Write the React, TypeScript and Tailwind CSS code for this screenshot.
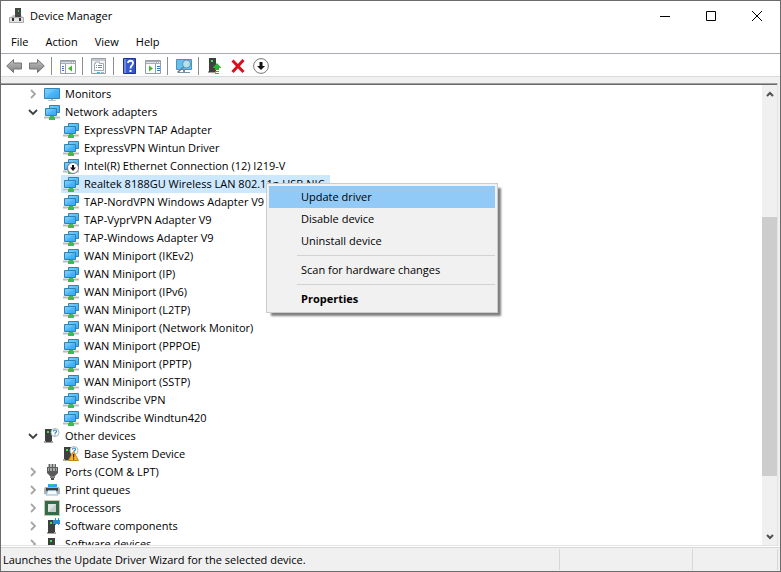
import React from 'react';
import clsx from 'clsx';

type IconProps = { className?: string };

const Svg = ({ className, children }: IconProps & { children: React.ReactNode }) => (
  <svg viewBox="0 0 16 16" fill="none" aria-hidden="true" className={clsx("h-4 w-4 shrink-0", className)}>
    {children}
  </svg>
);

const AppIcon = () => (
  <Svg>
    <path d="M6 0h6v9H6z" fill="#454745" />
    <path d="M9 2h1v2H9z" fill="#27e03c" />
    <path d="M2 9 4 7h2v2h6V7l2 2z" fill="#c6c6c6" />
    <path d="M.5 9.500h14v5H.5z" fill="#e2e3e4" stroke="#a9abac" />
    <path d="M3 10h2v3H3zM10 10h2v3h-2z" fill="#333" />
  </Svg>
);

const MonitorIcon = () => (
  <Svg>
    <path d="M.5 2.500h15v10H.5z" fill="url(#screen)" stroke="#3686b5" />
    <path d="M1 12 12 3h3v9z" fill="#2ba5fb" opacity=".35" />
    <path d="M7 13h2v1H7z" fill="#a7b4bc" />
    <path d="M4 14h8v1H4z" fill="#b8c8d1" />
  </Svg>
);

const NetworkIcon = ({ disabled }: { disabled?: boolean }) => (
  <Svg>
    <path d="M0 12h16v3H0z" fill="#dcdedf" />
    <path d="M0 13h16v1H0z" fill="#b9bcbd" />
    <path d="M5.500 1.500h10v7h-10z" fill="url(#screen)" stroke="#2f83b4" />
    <path d="M1.500 4.500h11v7h-11z" fill="url(#screen)" stroke="#2f83b4" />
    <path d="M2 11 11 5h1v6z" fill="#2ba5fb" opacity=".35" />
    <path d="M6 12h4v1h1v3H5v-3h1z" fill="#3fb950" />
    {disabled && (
      <>
        <circle cx="10" cy="10" r="5.500" fill="#fff" stroke="#777" />
        <path d="M9 7h2v2.500h2L10 13 7 9.500h2z" fill="#111" />
      </>
    )}
  </Svg>
);

const UnknownIcon = ({ warning }: { warning?: boolean }) => (
  <Svg>
    <path d="M1 1h7v12H1z" fill="#3e4040" />
    <path d="M0 13h9v2H0z" fill="#a4a6a6" />
    <path d="M2 13h5v1H2z" fill="#3e4040" />
    <path d="M3 3h2v2H3z" fill="#34e646" />
    <circle cx="11" cy="4.500" r="4" fill="#fff" stroke="#a9b6be" />
    <path d="M9.500 3.500c0-2 3-2 3 0 0 1-1.500 1-1.500 2.200M11 6.500v1" stroke="#2f87c4" strokeWidth="1.200" />
    {warning && (
      <>
        <path d="M10.500 5.500 15.500 14.500h-10z" fill="#fcb52b" stroke="#c98511" strokeLinejoin="round" />
        <path d="M10 8h1.200v3.500H10zM10 12.300h1.200v1.200H10z" fill="#222" />
      </>
    )}
  </Svg>
);

const PortIcon = () => (
  <Svg>
    <path d="M4 0h8v3H4z" fill="#b4b6b6" />
    <path d="M3 3h11v6l-3 3H6L3 9z" fill="#595b5b" />
    <path d="M4 4h9v3H4z" fill="#a4a6a6" />
    <path d="M5.500 0v7M8.500 0v7M11.500 0v7" stroke="#616363" />
    <path d="M6 12h5v2H6z" fill="#828484" />
    <path d="M7 14h3v2H7z" fill="#4b4d4d" />
  </Svg>
);

const PrinterIcon = () => (
  <Svg>
    <path d="M4 2h9v3H4z" fill="#2aa7f2" />
    <path d="M6 2h3v2H6z" fill="#46c84a" />
    <path d="M1 5h14l1 2v5H0V7z" fill="#aeb2b4" />
    <path d="M2 6h12v3H2z" fill="#3f4242" />
    <path d="M4 8.500h8l2 4.500H2z" fill="#f6f9fb" stroke="#8ab7d3" />
  </Svg>
);

const ProcessorIcon = () => (
  <Svg>
    <path d="M.5.500h15v15H.5z" stroke="#a28e4d" strokeDasharray="1 1" />
    <path d="M1 1h14v14H1z" fill="#326b50" />
    <path d="M4 4h8v8H4z" fill="#dfe4e1" />
    <path d="M4 12 12 4v8z" fill="#c4cdc8" />
  </Svg>
);

const SoftwareIcon = ({ component }: { component?: boolean }) => (
  <Svg>
    <path d="M4 2h7v12H4z" fill="#3e4040" />
    <path d="M3 14h9v2H3z" fill="#a4a6a6" />
    <path d="M4 14h6v1H4z" fill="#3e4040" />
    <path d="M6 4h2v2H6z" fill="#34e646" />
    {component && <path d="M9 2h2V0h1v2h2V0h1v2h1v4h-1v1h-1V6h-2v1h-1V6H9z" fill="#2d8bd0" />}
  </Svg>
);

const Arrow = ({ flip }: { flip?: boolean }) => (
  <Svg className={flip ? "-scale-x-100" : ""}>
    <path d="M.7 8 7.500 1.500V5h8v6h-8v3.500z" fill="url(#steel)" stroke="#757575" strokeLinejoin="round" />
  </Svg>
);

const PaneIcon = ({ flip }: { flip?: boolean }) => (
  <Svg>
    <path d="M.5 2.500h15v13H.5z" fill="#fbfbfb" stroke="#979da5" />
    <path d="M1 3h14v3H1z" fill="#a8aeb7" />
    <path d="M1 4h10v1H1z" fill="#dde1e6" />
    <path d="M12 4h1v1h-1zM14 4h1v1h-1z" fill="#fff" />
    {flip ? (
      <>
        <path d="M10.500 6v9" stroke="#979da5" />
        <path d="M12 8.500h3M12 10.500h3M12 12.500h3" stroke="#3e78b8" />
        <path d="M4 7.500v6l4-3z" fill="#43b62a" />
      </>
    ) : (
      <>
        <path d="M5.500 6v9" stroke="#979da5" />
        <path d="M2 8.500h2M2 10.500h2M2 12.500h2" stroke="#3e78b8" />
        <path d="M12 7.500v6l-4-3z" fill="#43b62a" />
      </>
    )}
  </Svg>
);

const PropertiesIcon = () => (
  <Svg>
    <path d="M.5.500h14v15H.5z" fill="#f3f4f5" stroke="#979da5" />
    <path d="M1 1h13v2H1z" fill="#c3c8ce" />
    <path d="M3.500 5.500h1V4h4v1.500h4v7h-9z" fill="#fff" stroke="#a2a8af" />
    <path d="M5 7.500h1M7 7.500h4M5 9.500h1M7 9.500h4" stroke="#7c8aa0" />
    <path d="M6 14h3v1H6z" fill="#20c3ef" />
    <path d="M10 14h3v1h-3z" fill="#b1b6bc" />
  </Svg>
);

const HelpIcon = () => (
  <Svg>
    <path d="M1.500.500h12v15h-12z" fill="#3559cf" stroke="#1c3392" />
    <path d="M2 1h2v14H2z" fill="#6e8ae6" />
    <path d="M6 5c0-3 5-3 5 0C11 7.500 8.500 7.500 8.500 10.500" stroke="#fff" strokeWidth="1.800" />
    <path d="M7.500 12h2v2h-2z" fill="#fff" />
  </Svg>
);

const ScanIcon = () => (
  <Svg>
    <path d="M.5 1.500h15v10H.5z" fill="#63c0f2" stroke="#4c93bb" />
    <path d="M2 14h12v1H2zM7 12h2v2H7z" fill="#7893a3" />
    <circle cx="10.500" cy="6" r="4" fill="#b8e2f8" fillOpacity=".9" stroke="#708c9e" />
    <path d="m7.500 9-6 5.500" stroke="#65818f" strokeWidth="1.600" />
  </Svg>
);

const UpdateIcon = () => (
  <Svg>
    <path d="M2 0h7v13H2z" fill="#3e4040" />
    <path d="M1 13h8v2H1z" fill="#a4a6a6" />
    <path d="M2 13h6v1H2z" fill="#3e4040" />
    <path d="M4 2h2v2H4z" fill="#34e646" />
    <path d="M10 5 14.500 10H12v2H8v-2H5.500z" fill="#22b634" />
    <path d="M8 13h4v1H8zM8 15h4v1H8z" fill="#22b634" />
  </Svg>
);

const UninstallIcon = () => (
  <Svg>
    <path d="M2.500 2.500 13.500 14M13.500 2 2.500 14" stroke="#d9101c" strokeWidth="3" />
  </Svg>
);

const DisableIcon = () => (
  <Svg>
    <circle cx="8" cy="8" r="7.400" fill="#fff" stroke="#777" />
    <path d="M6.500 4h3v4h2.500L8 12 4 8h2.500z" fill="#111" />
  </Svg>
);

const toolGroups = [
  [
    { label: "Back", icon: <Arrow /> },
    { label: "Forward", icon: <Arrow flip /> },
  ],
  [{ label: "Show/Hide Console Tree", icon: <PaneIcon /> }],
  [{ label: "Properties", icon: <PropertiesIcon /> }],
  [
    { label: "Help", icon: <HelpIcon /> },
    { label: "Show/Hide Action Pane", icon: <PaneIcon flip /> },
  ],
  [{ label: "Scan for hardware changes", icon: <ScanIcon /> }],
  [
    { label: "Update driver", icon: <UpdateIcon /> },
    { label: "Uninstall device", icon: <UninstallIcon /> },
    { label: "Disable device", icon: <DisableIcon /> },
  ],
];

const categories = [
  { name: "Monitors", icon: <MonitorIcon />, devices: [] },
  {
    name: "Network adapters",
    icon: <NetworkIcon />,
    devices: [
      "ExpressVPN TAP Adapter",
      "ExpressVPN Wintun Driver",
      "Intel(R) Ethernet Connection (12) I219-V",
      "Realtek 8188GU Wireless LAN 802.11n USB NIC",
      "TAP-NordVPN Windows Adapter V9",
      "TAP-VyprVPN Adapter V9",
      "TAP-Windows Adapter V9",
      "WAN Miniport (IKEv2)",
      "WAN Miniport (IP)",
      "WAN Miniport (IPv6)",
      "WAN Miniport (L2TP)",
      "WAN Miniport (Network Monitor)",
      "WAN Miniport (PPPOE)",
      "WAN Miniport (PPTP)",
      "WAN Miniport (SSTP)",
      "Windscribe VPN",
      "Windscribe Windtun420",
    ],
  },
  { name: "Other devices", icon: <UnknownIcon />, devices: ["Base System Device"] },
  { name: "Ports (COM & LPT)", icon: <PortIcon />, devices: [] },
  { name: "Print queues", icon: <PrinterIcon />, devices: [] },
  { name: "Processors", icon: <ProcessorIcon />, devices: [] },
  { name: "Software components", icon: <SoftwareIcon component />, devices: [] },
  { name: "Software devices", icon: <SoftwareIcon />, devices: [] },
];

const selected = "Realtek 8188GU Wireless LAN 802.11n USB NIC";

const deviceIcon = (name: string) => {
  if (name === "Base System Device") return <UnknownIcon warning />;
  return <NetworkIcon disabled={name.startsWith("Intel")} />;
};

const menuGroups = [
  ["Update driver", "Disable device", "Uninstall device"],
  ["Scan for hardware changes"],
  ["Properties"],
];

const ContextMenu = () => (
  <div
    role="menu"
    className="absolute left-[265px] top-[182px] w-[232px] border border-[#ccc] bg-[#f1f1f1] p-0.5 shadow-[4px_4px_2px_-1px_rgba(0,0,0,0.5)]"
  >
    {menuGroups.map((group, index) => (
      <div key={index}>
        {index > 0 && <div className="my-[3px] ml-7 h-px bg-[#d2d2d2]" />}
        {group.map((item) => (
          <button
            key={item}
            role="menuitem"
            className={clsx(
              "block h-[22px] w-full pl-8 text-left",
              item === "Update driver" && "bg-[#91c9f7]",
              item === "Properties" && "font-bold"
            )}
          >
            {item}
          </button>
        ))}
      </div>
    ))}
  </div>
);

const DeviceTree = () => (
  <ul role="tree" aria-label="Devices" className="min-w-0 flex-1 overflow-hidden pl-6">
    {categories.map(({ name, icon, devices }) => {
      const open = devices.length > 0;
      return (
        <li key={name} role="treeitem" aria-expanded={open}>
          <div className="flex h-[18px] items-center">
            <button aria-label={`Toggle ${name}`} className="mr-[3px] flex w-4 justify-center">
              <svg viewBox="0 0 10 10" className="h-2.5 w-2.5" fill="none" strokeWidth="1.800">
                {open ? <path d="M1 3 5 7 9 3" stroke="#404040" /> : <path d="M3 1 7 5 3 9" stroke="#a6a6a6" />}
              </svg>
            </button>
            {icon}
            <span className="ml-1 whitespace-nowrap px-px">{name}</span>
          </div>
          {open && (
            <ul role="group" className="pl-9">
              {devices.map((device) => (
                <li key={device} role="treeitem" aria-selected={device === selected} className="flex h-[18px]">
                  <div className={clsx("flex items-center pl-0.5 pr-1", device === selected && "bg-[#cce8ff]")}>
                    {deviceIcon(device)}
                    <span className="ml-1 whitespace-nowrap px-px">{device}</span>
                  </div>
                </li>
              ))}
            </ul>
          )}
        </li>
      );
    })}
  </ul>
);

const ScrollBar = () => (
  <div className="flex w-[15px] flex-col bg-[#f0f0f0]">
    <button aria-label="Scroll up" className="flex h-[17px] items-center justify-center">
      <svg viewBox="0 0 8 8" className="h-2 w-2" fill="none"><path d="M1 6 4 3 7 6" stroke="#505050" strokeWidth="2" /></svg>
    </button>
    <div className="flex flex-1 flex-col">
      <div className="grow-[115]" />
      <div className="grow-[260] bg-[#cdcdcd]" />
      <div className="grow-[52]" />
    </div>
    <button aria-label="Scroll down" className="flex h-[17px] items-center justify-center">
      <svg viewBox="0 0 8 8" className="h-2 w-2" fill="none"><path d="M1 2 4 5 7 2" stroke="#505050" strokeWidth="2" /></svg>
    </button>
  </div>
);

const App = () => {
  return (
    <div className="relative flex h-screen flex-col overflow-hidden border border-[#6b6b6b] bg-white font-['Open_Sans',sans-serif] text-[11px] leading-4 text-black">
      {/* Shared gradients */}
      <svg className="absolute h-0 w-0" aria-hidden="true">
        <linearGradient id="screen" x1="0" y1="0" x2="1" y2="1">
          <stop offset="0" stopColor="#83d2fb" />
          <stop offset="1" stopColor="#35a9f4" />
        </linearGradient>
        <linearGradient id="steel" x1="0" y1="0" x2="0" y2="1">
          <stop offset="0" stopColor="#c4c4c4" />
          <stop offset="1" stopColor="#7f7f7f" />
        </linearGradient>
      </svg>

      {/* Title bar */}
      <header className="flex h-[30px] shrink-0 items-center pl-2">
        <AppIcon />
        <h1 className="ml-[5px] flex-1">Device Manager</h1>
        <button aria-label="Minimize" className="flex h-full w-[46px] items-center justify-center">
          <svg viewBox="0 0 10 10" className="h-2.5 w-2.5"><path d="M0 5.500h10" stroke="#000" /></svg>
        </button>
        <button aria-label="Maximize" className="flex h-full w-[46px] items-center justify-center">
          <svg viewBox="0 0 10 10" className="h-2.5 w-2.5" fill="none"><path d="M.5.500h9v9h-9z" stroke="#000" /></svg>
        </button>
        <button aria-label="Close" className="flex h-full w-[46px] items-center justify-center">
          <svg viewBox="0 0 10 10" className="h-2.5 w-2.5"><path d="m0 0 10 10M10 0 0 10" stroke="#000" /></svg>
        </button>
      </header>

      {/* Menu bar */}
      <nav className="flex h-[23px] shrink-0 items-center gap-[17px] border-b border-[#a9abb3] pl-2.5">
        {["File", "Action", "View", "Help"].map((item) => (
          <button key={item}>{item}</button>
        ))}
      </nav>

      {/* Toolbar */}
      <div role="toolbar" className="flex h-[23px] shrink-0 items-center border-b border-[#d9d9d9] pl-[5px] pt-0.5">
        {toolGroups.map((group, index) => (
          <div key={index} className={clsx("flex items-center gap-[7px]", index > 0 && "ml-1.5 h-[18px] border-l border-[#8d8d8d] pl-2")}>
            {group.map(({ label, icon }) => (
              <button key={label} aria-label={label} title={label}>{icon}</button>
            ))}
          </div>
        ))}
      </div>

      {/* Device list */}
      <main className="flex min-h-0 flex-1 flex-col bg-[#f0f0f0] pt-1.5">
        <div className="mr-0.5 flex min-h-0 flex-1 flex-col border-b border-r border-t border-[#e3e3e3] border-t-[#a0a0a0] bg-white">
          <div className="flex min-h-0 flex-1 border-t border-[#696969]">
            <DeviceTree />
            <ScrollBar />
          </div>
        </div>
      </main>

      {/* Status bar */}
      <footer className="mt-px flex h-6 shrink-0 border-t border-[#d7d7d7] bg-[#f0f0f0] py-px">
        <p className="flex-1 truncate border-r border-[#d7d7d7] pl-0.5 leading-[22px]">
          Launches the Update Driver Wizard for the selected device.
        </p>
        <div className="w-[133px] border-r border-[#d7d7d7]" />
        <div className="mr-0.5 w-[85px] border-r border-[#d7d7d7]" />
      </footer>

      <ContextMenu />
    </div>
  );
};

export default App;
